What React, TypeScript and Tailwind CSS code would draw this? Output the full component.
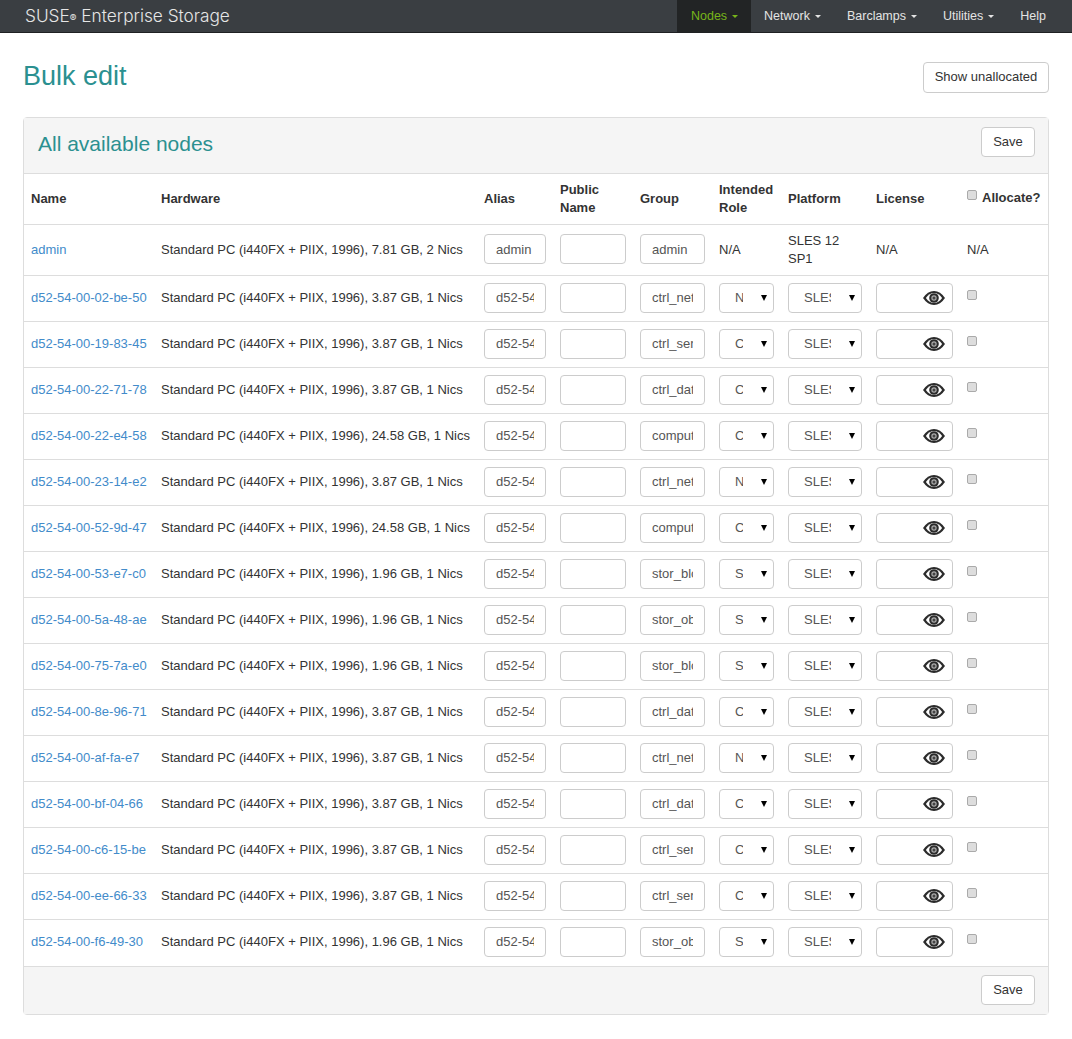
const rows = [
  ["d52-54-00-02-be-50", "3.87 GB", "ctrl_network", "Network"],
  ["d52-54-00-19-83-45", "3.87 GB", "ctrl_services", "Controller"],
  ["d52-54-00-22-71-78", "3.87 GB", "ctrl_database", "Controller"],
  ["d52-54-00-22-e4-58", "24.58 GB", "compute", "Compute"],
  ["d52-54-00-23-14-e2", "3.87 GB", "ctrl_network", "Network"],
  ["d52-54-00-52-9d-47", "24.58 GB", "compute", "Compute"],
  ["d52-54-00-53-e7-c0", "1.96 GB", "stor_block", "Storage"],
  ["d52-54-00-5a-48-ae", "1.96 GB", "stor_object", "Storage"],
  ["d52-54-00-75-7a-e0", "1.96 GB", "stor_block", "Storage"],
  ["d52-54-00-8e-96-71", "3.87 GB", "ctrl_database", "Controller"],
  ["d52-54-00-af-fa-e7", "3.87 GB", "ctrl_network", "Network"],
  ["d52-54-00-bf-04-66", "3.87 GB", "ctrl_database", "Controller"],
  ["d52-54-00-c6-15-be", "3.87 GB", "ctrl_services", "Controller"],
  ["d52-54-00-ee-66-33", "3.87 GB", "ctrl_services", "Controller"],
  ["d52-54-00-f6-49-30", "1.96 GB", "stor_object", "Storage"],
];

const inputCls =
  "block h-[30px] w-full rounded-[4px] border border-[#ccc] bg-white px-[11px] text-[13px] text-[#555] outline-none";
const selectCls =
  "block h-[30px] w-full appearance-none rounded-[4px] border border-[#ccc] bg-white pl-[15px] pr-[30px] text-[13px] text-[#555]";
const thCls = "border-b border-[#ddd] px-[7px] py-[7px] text-left align-middle font-bold leading-[18px]";
const tdCls = "border-t border-[#ddd] px-[7px] pb-[2px] align-middle leading-[18px]";
const adminCls = "border-t border-[#ddd] px-[7px] align-middle leading-[18px]";

function EyeIcon() {
  return (
    <svg width="22" height="14" viewBox="0 0 22 14" className="block">
      <path d="M0 7C3 2.400 6.800 0 11 0S19 2.400 22 7C19 11.600 15.200 14 11 14S3 11.600 0 7Z" fill="#2b2b2b" />
      <path d="M2.900 7C5.200 3.800 7.900 2 11 2S16.800 3.800 19.100 7C16.800 10.200 14.100 12 11 12S5.200 10.200 2.900 7Z" fill="#fff" />
      <circle cx="11" cy="7" r="4.800" fill="#2b2b2b" />
      <circle cx="11" cy="7" r="2.700" fill="#aaa" />
      <circle cx="11" cy="7" r="1.500" fill="#444" />
    </svg>
  );
}

function SmallCheck() {
  return <span className="block h-[10px] w-[10px] rounded-[2px] border border-[#aaa] bg-[#ddd]" />;
}

function Caret() {
  return <span className="absolute right-[7px] top-[12px] border-x-[3px] border-t-[6px] border-x-transparent border-t-black" />;
}

function NavItem({ label, caret = true, active = false }: { label: string; caret?: boolean; active?: boolean }) {
  return (
    <a
      className={
        active
          ? "flex h-full items-center gap-[5px] bg-[#222425] pl-[14px] pr-[13px] text-[#77b41a]"
          : "flex h-full items-center gap-[5px] px-[13px] text-[#e4e4e4]"
      }
    >
      {label}
      {caret && <span className="mt-[1px] border-x-[3px] border-t-[3px] border-x-transparent border-t-current" />}
    </a>
  );
}

function SaveButton() {
  return (
    <button className="h-[30px] w-[54px] rounded-[4px] border border-[#ccc] bg-white text-[13px] text-[#333]">
      Save
    </button>
  );
}

export default function App() {
  return (
    <div className="min-h-[1039px] bg-white font-['Liberation_Sans',sans-serif] text-[13px] text-[#333]">
      <nav className="flex h-[33px] items-center justify-between border-b border-[#1f2123] bg-[#3a3e42]">
        <div className="pl-[25px] font-['Inter',sans-serif] text-[17.250px] font-light text-[#e6e6e6]">
          SUSE<span className="text-[10px] font-normal">®</span> Enterprise Storage
        </div>
        <div className="mr-[13px] flex h-full text-[12.500px]">
          <NavItem label="Nodes" active />
          <NavItem label="Network" />
          <NavItem label="Barclamps" />
          <NavItem label="Utilities" />
          <NavItem label="Help" caret={false} />
        </div>
      </nav>

      <div className="px-[23px]">
        <div className="flex items-start justify-between pt-[29px]">
          <h1 className="text-[27px] leading-[29px] text-[#2b9090]">Bulk edit</h1>
          <button className="h-[31px] w-[126px] rounded-[4px] border border-[#ccc] bg-white pb-[1px] text-[13px] text-[#333]">
            Show unallocated
          </button>
        </div>

        <div className="mt-[24px] rounded-[4px] border border-[#ddd]">
          <div className="flex h-[56px] items-start justify-between border-b border-[#ddd] bg-[#f5f5f5] pl-[14px] pr-[13px] pt-[9px]">
            <h2 className="pt-[3px] text-[21px] leading-[27px] text-[#2b9090]">All available nodes</h2>
            <SaveButton />
          </div>

          <table className="w-full table-fixed border-collapse">
            <colgroup>
              <col className="w-[130px]" />
              <col className="w-[323px]" />
              <col className="w-[76px]" />
              <col className="w-[80px]" />
              <col className="w-[79px]" />
              <col className="w-[69px]" />
              <col className="w-[88px]" />
              <col className="w-[91px]" />
              <col />
            </colgroup>
            <thead>
              <tr className="h-[50px]">
                <th className={thCls}>Name</th>
                <th className={thCls}>Hardware</th>
                <th className={thCls}>Alias</th>
                <th className={thCls}>Public Name</th>
                <th className={thCls}>Group</th>
                <th className={thCls}>Intended Role</th>
                <th className={thCls}>Platform</th>
                <th className={thCls}>License</th>
                <th className={thCls + " whitespace-nowrap"}>
                  <div className="-mt-[3px] flex items-start gap-[5px]">
                    <span className="pt-[1px]"><SmallCheck /></span>
                    <span>Allocate?</span>
                  </div>
                </th>
              </tr>
            </thead>
            <tbody>
              <tr className="h-[51px]">
                <td className={adminCls}><a className="text-[#428bca]">admin</a></td>
                <td className={adminCls + " whitespace-nowrap"}>Standard PC (i440FX + PIIX, 1996), 7.81 GB, 2 Nics</td>
                <td className={tdCls}><input readOnly value="admin" className={inputCls} /></td>
                <td className={tdCls}><input readOnly value="" className={inputCls} /></td>
                <td className={tdCls}><input readOnly value="admin" className={inputCls} /></td>
                <td className={adminCls}>N/A</td>
                <td className={adminCls}>SLES 12 SP1</td>
                <td className={adminCls}>N/A</td>
                <td className={adminCls}>N/A</td>
              </tr>
              {rows.map(([name, ram, group, role]) => (
                <tr key={name} className="h-[46px]">
                  <td className={tdCls + " whitespace-nowrap"}><a className="text-[#428bca]">{name}</a></td>
                  <td className={tdCls + " whitespace-nowrap"}>Standard PC (i440FX + PIIX, 1996), {ram}, 1 Nics</td>
                  <td className={tdCls}><input readOnly value={name} className={inputCls} /></td>
                  <td className={tdCls}><input readOnly value="" className={inputCls} /></td>
                  <td className={tdCls}><input readOnly value={group} className={inputCls} /></td>
                  <td className={tdCls}>
                    <div className="relative">
                      <select defaultValue={role} className={selectCls}>
                        <option>{role}</option>
                      </select>
                      <Caret />
                    </div>
                  </td>
                  <td className={tdCls}>
                    <div className="relative">
                      <select defaultValue="SLES 12 SP1" className={selectCls}>
                        <option>SLES 12 SP1</option>
                      </select>
                      <Caret />
                    </div>
                  </td>
                  <td className={tdCls}>
                    <div className="relative">
                      <input readOnly value="" className={inputCls} />
                      <span className="absolute right-[8px] top-[8px]"><EyeIcon /></span>
                    </div>
                  </td>
                  <td className={tdCls + " !align-top pt-[14px]"}>
                    <SmallCheck />
                  </td>
                </tr>
              ))}
            </tbody>
          </table>

          <div className="flex h-[48px] items-center justify-end border-t border-[#ddd] bg-[#f5f5f5] pr-[13px]">
            <SaveButton />
          </div>
        </div>
      </div>
    </div>
  );
}
